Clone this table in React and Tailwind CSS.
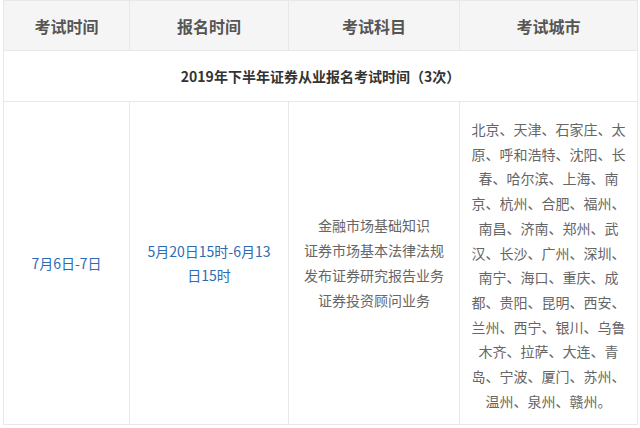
import React from "react";

const cities = [
  "北京、天津、石家庄、太",
  "原、呼和浩特、沈阳、长",
  "春、哈尔滨、上海、南",
  "京、杭州、合肥、福州、",
  "南昌、济南、郑州、武",
  "汉、长沙、广州、深圳、",
  "南宁、海口、重庆、成",
  "都、贵阳、昆明、西安、",
  "兰州、西宁、银川、乌鲁",
  "木齐、拉萨、大连、青",
  "岛、宁波、厦门、苏州、",
  "温州、泉州、赣州。",
];

const subjects = [
  "金融市场基础知识",
  "证券市场基本法律法规",
  "发布证券研究报告业务",
  "证券投资顾问业务",
];

const App = () => {
  return (
    <div
      className="w-[640px] h-[428px] bg-white pl-[3px] overflow-hidden"
      style={{ fontFamily: '"Microsoft YaHei", "Noto Sans CJK SC", sans-serif' }}
    >
      <table className="w-[634px] border-collapse table-fixed text-[14px] text-[#666]">
        <colgroup>
          <col className="w-[126px]" />
          <col className="w-[159px]" />
          <col className="w-[171px]" />
          <col className="w-[178px]" />
        </colgroup>
        <thead>
          {/* header row */}
          <tr className="bg-[#f5f5f5] h-[50px]">
            {["考试时间", "报名时间", "考试科目", "考试城市"].map((t) => (
              <th
                key={t}
                className="border border-[#e8e8e8] text-[16px] font-bold text-[#555] text-center align-middle"
              >
                {t}
              </th>
            ))}
          </tr>
        </thead>
        <tbody>
          <tr className="h-[51px]">
            <td
              colSpan={4}
              className="border border-[#e8e8e8] text-center align-middle font-bold text-[#333] text-[14px]"
            >
              2019年下半年证券从业报名考试时间（3次）
            </td>
          </tr>
          <tr>
            <td className="border border-[#e8e8e8] text-center align-middle text-[#2b6cb3]">
              7月6日-7日
            </td>
            <td className="border border-[#e8e8e8] text-center align-middle text-[#2b6cb3] leading-[24px]">
              5月20日15时-6月13
              <br />
              日15时
            </td>
            <td className="border border-[#e8e8e8] text-center align-middle leading-[25px]">
              {subjects.map((s) => (
                <div key={s}>{s}</div>
              ))}
            </td>
            <td className="border border-[#e8e8e8] text-center align-top pt-[15px] pb-[11px] leading-[24.7px]">
              {cities.map((c) => (
                <div key={c} className="whitespace-nowrap">
                  {c}
                </div>
              ))}
            </td>
          </tr>
        </tbody>
      </table>
    </div>
  );
};

export default App;
